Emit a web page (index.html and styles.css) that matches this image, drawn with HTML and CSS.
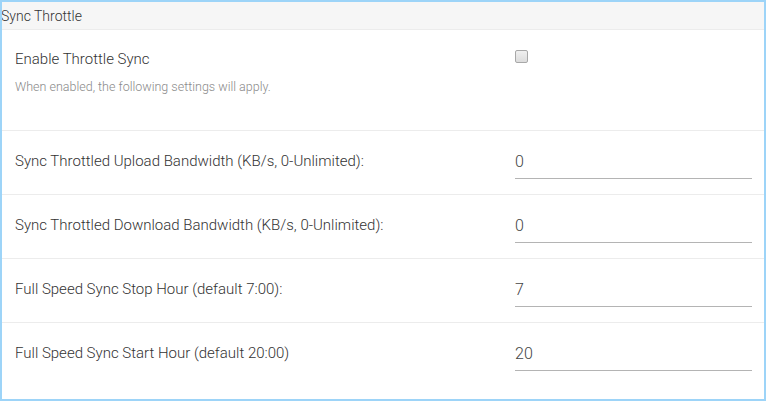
FILE: index.html
```html
<!DOCTYPE html>
<html>
<head>
<meta charset="utf-8">
<link rel="stylesheet" href="styles.css">
</head>
<body>
<div class="panel">
  <div class="panel-head">Sync Throttle</div>
  <div class="row row-tall">
    <div class="label">
      <div class="label-main">Enable Throttle Sync</div>
      <div class="label-help">When enabled, the following settings will apply.</div>
    </div>
    <div class="control control-check"><span class="checkbox"></span></div>
  </div>
  <div class="row">
    <div class="label"><div class="label-main">Sync Throttled Upload Bandwidth (KB/s, 0-Unlimited):</div></div>
    <div class="control"><div class="input">0</div></div>
  </div>
  <div class="row">
    <div class="label"><div class="label-main">Sync Throttled Download Bandwidth (KB/s, 0-Unlimited):</div></div>
    <div class="control"><div class="input">0</div></div>
  </div>
  <div class="row">
    <div class="label"><div class="label-main">Full Speed Sync Stop Hour (default 7:00):</div></div>
    <div class="control"><div class="input">7</div></div>
  </div>
  <div class="row row-last">
    <div class="label"><div class="label-main">Full Speed Sync Start Hour (default 20:00)</div></div>
    <div class="control"><div class="input">20</div></div>
  </div>
</div>
</body>
</html>
```

FILE: styles.css
```css
html, body {
  margin: 0;
  padding: 0;
  background: #fff;
}
body {
  font-family: Roboto, "Liberation Sans", sans-serif;
  color: #333;
}
.panel {
  width: 766px;
  height: 401px;
  box-sizing: border-box;
  border: 2px solid #9dd4f8;
  background: #fff;
  overflow: hidden;
}
.panel-head {
  height: 27px;
  line-height: 28px;
  background: #f6f6f6;
  border-bottom: 1px solid #ececec;
  font-size: 14px;
  font-weight: 300;
  color: #333;
  margin-left: -1px;
}
.row {
  display: flex;
  height: 63px;
  border-bottom: 1px solid #ececec;
  padding-left: 13px;
}
.row-tall {
  height: 100px;
}
.row-last {
  border-bottom: none;
}
.label {
  flex: 1;
  padding-top: 21px;
}
.row-tall .label {
  padding-top: 20px;
}
.label-main {
  font-size: 15px;
  font-weight: 300;
  line-height: 18px;
  color: #333;
}
.label-help {
  font-size: 12.5px;
  font-weight: 300;
  color: #8a8a8a;
  margin-top: 12px;
  line-height: 14px;
}
.control {
  width: 237px;
  margin-right: 12px;
  padding-top: 19px;
}
.control-check {
  padding-top: 20px;
}
.checkbox {
  display: block;
  width: 11px;
  height: 11px;
  border: 1px solid #a8a8a8;
  border-radius: 2px;
  background: linear-gradient(#f0f0f0, #dcdcdc);
}
.input {
  height: 28px;
  line-height: 24px;
  font-size: 16px;
  font-weight: 300;
  color: #444;
  border-bottom: 1px solid #b4b4b4;
}
```
